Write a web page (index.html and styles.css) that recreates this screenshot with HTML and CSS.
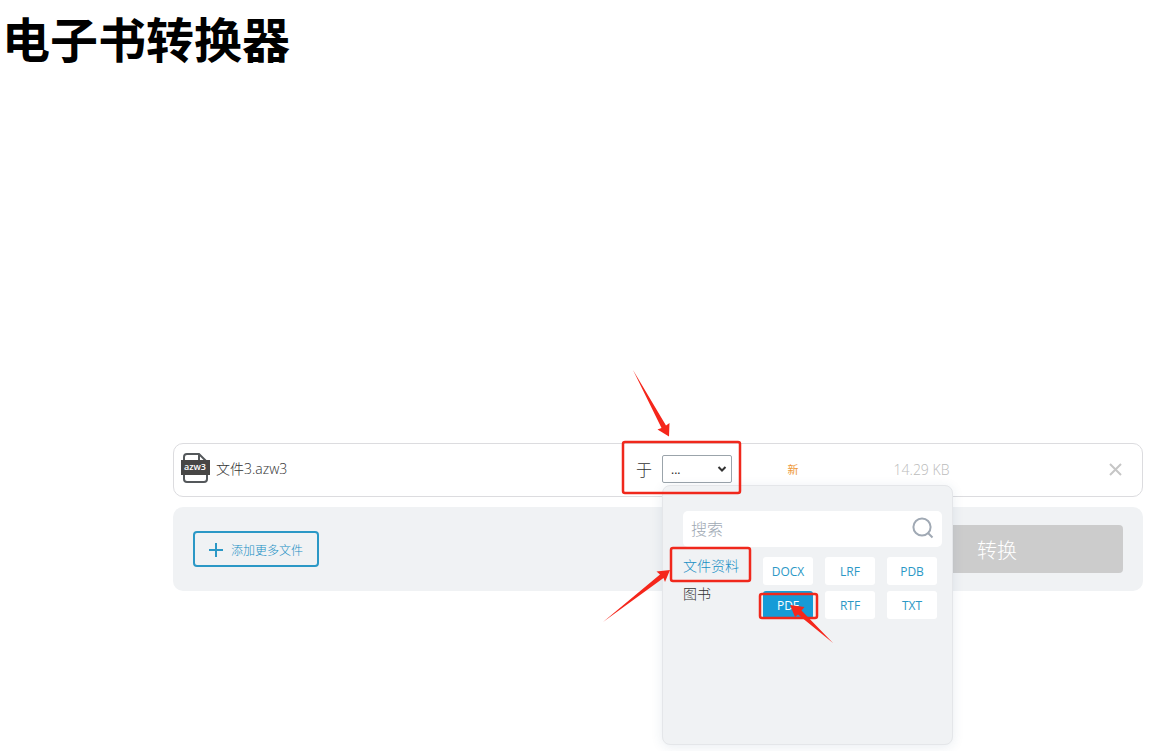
FILE: index.html
```html
<!DOCTYPE html>
<html lang="zh-CN">
<head>
<meta charset="utf-8">
<meta name="viewport" content="width=device-width, initial-scale=1">
<title>电子书转换器</title>
<link rel="stylesheet" href="styles.css">
</head>
<body>
<header class="page-header">
  <h1 class="page-title">电子书转换器</h1>
</header>
<main class="converter">
  <section class="file-row">
    <div class="file-info">
      <svg class="file-icon" viewBox="0 0 30 32" aria-hidden="true">
        <path d="M4 8V5a3 3 0 0 1 3-3h12l8 8v17a3 3 0 0 1-3 3H7a3 3 0 0 1-3-3v-7M19 2v8h8" fill="none" stroke="#54585b" stroke-width="2"/>
        <rect x="1" y="8" width="29" height="15" fill="#474645"/>
        <text class="file-icon-text" x="15" y="18" text-anchor="middle">azw3</text>
      </svg>
      <span class="file-name">文件3.azw3</span>
    </div>
    <div class="format">
      <label class="format-label" for="format">于</label>
      <div class="format-field">
        <select class="format-select" id="format"><option>...</option></select>
        <svg class="format-arrow" viewBox="0 0 10 8" aria-hidden="true"><path d="M1.5 2L5 5.5 8.500 2" fill="none" stroke="#333" stroke-width="2"/></svg>
        <div class="menu">
          <div class="search">
            <input class="search-input" type="text" placeholder="搜索" aria-label="搜索">
            <svg class="search-icon" viewBox="0 0 22 22" aria-hidden="true"><circle cx="10" cy="10" r="8.600" fill="none" stroke="#a0a9b4" stroke-width="2"/><path d="M16 16l4.500 4.500" stroke="#a0a9b4" stroke-width="2"/></svg>
          </div>
          <div class="menu-body">
            <nav class="categories">
              <a class="category category-active" href="#documents">文件资料</a>
              <a class="category" href="#books">图书</a>
            </nav>
            <div class="formats">
              <button class="format-option" type="button">DOCX</button>
              <button class="format-option" type="button">LRF</button>
              <button class="format-option" type="button">PDB</button>
              <button class="format-option format-option-active" type="button">PDF</button>
              <button class="format-option" type="button">RTF</button>
              <button class="format-option" type="button">TXT</button>
            </div>
          </div>
        </div>
        <svg class="annotations" viewBox="600 365 240 285" aria-hidden="true">
          <g fill="none" stroke="#f0281c" stroke-width="2.500">
            <rect x="623" y="442" width="117" height="51" rx="2"/>
            <rect x="671" y="548" width="79" height="33" rx="2"/>
            <rect x="760" y="594" width="57" height="24" rx="2"/>
          </g>
          <g fill="#f5261b">
            <path d="M633 370L661.500 428L657.500 429.500L669 436.500L669.500 423L666 425.500Z"/>
            <path d="M603 622L663.500 578L665 582L670 570L656.500 571.500L660 574.500Z"/>
            <path d="M833 643L801.500 610.500L804.500 607L790 605L795 617L798 614.500Z"/>
          </g>
        </svg>
      </div>
    </div>
    <span class="file-status">新</span>
    <span class="file-size">14.29 KB</span>
    <button class="remove" type="button" aria-label="移除">
      <svg class="remove-icon" viewBox="0 0 13 13" aria-hidden="true"><path d="M1 1l11 11M12 1L1 12" stroke="#c6c6c6" stroke-width="2"/></svg>
    </button>
  </section>
  <section class="actions">
    <button class="add-files" type="button">
      <svg class="add-icon" viewBox="0 0 14 14" aria-hidden="true"><path d="M7 0v14M0 7h14" stroke="#2b98c6" stroke-width="2"/></svg>
      <span>添加更多文件</span>
    </button>
    <button class="convert" type="button">转换</button>
  </section>
</main>
</body>
</html>
```
FILE: styles.css
```css
* {
  box-sizing: border-box;
}

body {
  min-height: 100vh;
  margin: 0;
  background: #fff;
  color: #333;
  font-family: "Open Sans", "Noto Sans CJK SC", sans-serif;
  font-size: 14px;
  font-weight: 300;
}

button,
input,
select {
  font: inherit;
}

.page-header {
  padding: 8px 2px 0;
}

.page-title {
  margin: 0;
  color: #000;
  font-size: 48px;
  font-weight: 700;
  line-height: 64px;
}

.converter {
  display: flex;
  flex-direction: column;
  gap: 10px;
  margin-top: 371px;
  padding: 0 6px 0 173px;
}

.file-row {
  display: flex;
  align-items: center;
  height: 54px;
  padding: 0 18px 2px 6px;
  border: 1px solid #dcdcdf;
  border-radius: 10px;
}

.file-info {
  display: flex;
  flex: 1;
  align-items: center;
  gap: 6px;
  padding-bottom: 2px;
}

.file-icon {
  width: 30px;
  height: 32px;
}

.file-icon-text {
  fill: #fff;
  font-size: 9px;
  font-weight: 600;
}

.format {
  display: flex;
  align-items: center;
  gap: 10px;
}

.format-label {
  font-size: 16px;
}

.format-field {
  position: relative;
  width: 70px;
  height: 28px;
}

.format-select {
  appearance: none;
  width: 100%;
  height: 100%;
  padding: 0 8px;
  border: 1px solid #9ba4ab;
  border-radius: 2px;
  background: #fff;
  color: #222;
  font-size: 12px;
  font-weight: 400;
}

.format-arrow {
  position: absolute;
  top: 10px;
  right: 5px;
  width: 10px;
  height: 8px;
  pointer-events: none;
}

.menu {
  position: absolute;
  z-index: 2;
  top: 30px;
  left: 0;
  width: 291px;
  height: 260px;
  padding: 25px 10px 0 20px;
  border: 1px solid #e4e6e9;
  border-radius: 8px;
  background: #f0f2f4;
  box-shadow: 0 2px 12px rgba(40, 80, 120, 0.1);
}

.search {
  display: flex;
  align-items: center;
  height: 36px;
  padding: 0 8px;
  border-radius: 5px;
  background: #fff;
}

.search-input {
  flex: 1;
  min-width: 0;
  padding: 0;
  border: 0;
  outline: 0;
  background: none;
  font-size: 16px;
}

.search-input::placeholder {
  color: #a0a9b4;
}

.search-icon {
  width: 22px;
  height: 22px;
  margin-bottom: 2px;
}

.menu-body {
  display: flex;
  justify-content: space-between;
  padding: 5px 5px 0 0;
}

.categories {
  display: flex;
  flex-direction: column;
}

.category {
  color: #333;
  line-height: 28px;
  text-decoration: none;
}

.category-active {
  color: #188fc4;
}

.formats {
  display: grid;
  grid-template-columns: repeat(3, 50px);
  gap: 6px 12px;
  padding-top: 5px;
}

.format-option {
  height: 28px;
  padding: 0;
  border: 0;
  border-radius: 3px;
  background: #fff;
  color: #2b98c6;
  font-size: 12px;
  font-weight: 400;
}

.format-option-active {
  background: #169bd7;
  color: #fff;
}

.annotations {
  position: absolute;
  z-index: 3;
  top: -90px;
  left: -62px;
  width: 240px;
  height: 285px;
  pointer-events: none;
}

.file-status {
  width: 122px;
  color: #ee9838;
  font-size: 11px;
  font-weight: 400;
  text-align: center;
}

.file-size {
  width: 135px;
  color: #bbb;
  text-align: center;
}

.remove {
  display: flex;
  margin-left: 118px;
  padding: 2px;
  border: 0;
  background: none;
}

.remove-icon {
  width: 13px;
  height: 13px;
}

.actions {
  display: flex;
  align-items: center;
  justify-content: space-between;
  height: 84px;
  padding: 0 20px;
  border-radius: 10px;
  background: #f0f2f4;
}

.add-files {
  display: flex;
  align-items: center;
  justify-content: center;
  gap: 8px;
  width: 126px;
  height: 36px;
  padding: 2px 0 0;
  border: 2px solid #2b98c6;
  border-radius: 4px;
  background: none;
  color: #188fc4;
  font-size: 12px;
}

.add-icon {
  width: 14px;
  height: 14px;
}

.convert {
  width: 252px;
  height: 48px;
  border: 0;
  border-radius: 4px;
  background: #ccc;
  color: #fff;
  font-size: 20px;
}
```
